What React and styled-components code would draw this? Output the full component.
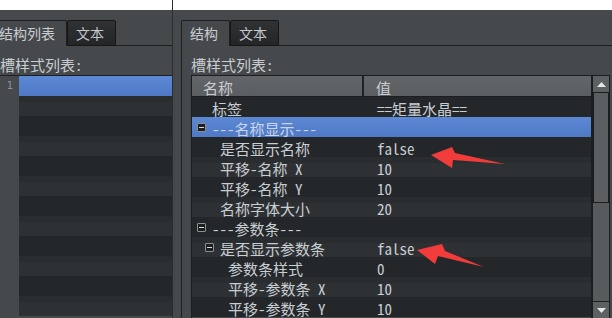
import React from "react";
import styled, { createGlobalStyle } from "styled-components";

const MONO = `"Noto Sans Mono CJK SC", "DejaVu Sans Mono", "Noto Sans CJK SC", monospace`;
const UI = `"Noto Sans CJK SC", "DejaVu Sans", sans-serif`;

const rows = [
  { level: 1, name: "标签", value: "==矩量水晶==" },
  { level: 1, group: true, name: "---名称显示---", selected: true },
  { level: 2, name: "是否显示名称", value: "false" },
  { level: 2, name: "平移-名称 X", value: "10" },
  { level: 2, name: "平移-名称 Y", value: "10" },
  { level: 2, name: "名称字体大小", value: "20" },
  { level: 1, group: true, name: "---参数条---" },
  { level: 2, group: true, name: "是否显示参数条", value: "false" },
  { level: 3, name: "参数条样式", value: "0" },
  { level: 3, name: "平移-参数条 X", value: "10" },
  { level: 3, name: "平移-参数条 Y", value: "10" },
];

const GlobalStyle = createGlobalStyle`
  html, body {
    margin: 0;
    padding: 0;
    background: #45494b;
    overflow: hidden;
  }
`;

const App = () => {
  return (
    <>
      <GlobalStyle />
      <Screen>
        <LeftWindow>
          <TitleStrip />
          <Body $shift={-10}>
            <TabBar>
              <Tab $active>结构列表</Tab>
              <Tab>文本</Tab>
              <TabFill />
            </TabBar>
            <Pane>
              <Label>槽样式列表:</Label>
              <ListFrame>
                {Array.from({ length: 12 }).map((_, i) => (
                  <ListRow key={i}>
                    <Gutter>{i === 0 ? "1" : ""}</Gutter>
                    <ListCell $index={i} $selected={i === 0} />
                  </ListRow>
                ))}
              </ListFrame>
            </Pane>
          </Body>
        </LeftWindow>

        <RightWindow>
          <TitleStrip />
          <Body $shift={8}>
            <TabBar>
              <Tab $active>结构</Tab>
              <Tab>文本</Tab>
              <TabFill />
            </TabBar>
            <Pane $bordered>
              <Label>槽样式列表:</Label>
              <TableFrame>
                <Grid>
                  <HeaderRow>
                    <NameHead>名称</NameHead>
                    <ValueHead>值</ValueHead>
                  </HeaderRow>
                  {rows.map((r, i) => (
                    <Row key={i} $index={i} $selected={r.selected}>
                      <NameCell $indent={20 + 8 * (r.level - 1) - (r.group ? 15 : 0)}>
                        {r.group && <Toggle />}
                        <span>{r.name}</span>
                      </NameCell>
                      <ValueCell>{r.value || ""}</ValueCell>
                    </Row>
                  ))}
                </Grid>
                <ScrollBar>
                  <ScrollButton>
                    <svg width="9" height="5" viewBox="0 0 9 5">
                      <path d="M0 5 L4.5 0 L9 5 Z" fill="#e4e6e8" />
                    </svg>
                  </ScrollButton>
                  <Track>
                    <Thumb />
                  </Track>
                  <ScrollButton>
                    <svg width="9" height="5" viewBox="0 0 9 5">
                      <path d="M0 0 L4.5 5 L9 0 Z" fill="#e4e6e8" />
                    </svg>
                  </ScrollButton>
                </ScrollBar>
              </TableFrame>
            </Pane>
          </Body>
        </RightWindow>

        <Annotations width="612" height="318" viewBox="0 0 612 318">
          <polygon points="431,155 452,147 455,153 505,164 453,160 452,168" fill="#f23b3b" />
          <polygon points="417,250 442,244 445,251 484,267 438,256 435,264" fill="#f23b3b" />
        </Annotations>
      </Screen>
    </>
  );
};

export default App;

const Screen = styled.div`
  position: relative;
  width: 612px;
  height: 318px;
  display: flex;
  overflow: hidden;
  background: #45494b;
`;

const LeftWindow = styled.div`
  width: 172px;
  flex: none;
  display: flex;
  flex-direction: column;
  overflow: hidden;
  border-right: 1px solid #2a2c2e;
  background: #45494b;
`;

const RightWindow = styled.div`
  flex: 1;
  display: flex;
  flex-direction: column;
  overflow: hidden;
  background: #45494b;
`;

const TitleStrip = styled.div`
  height: 10px;
  flex: none;
  background: #ffffff;
`;

const Body = styled.div`
  flex: 1;
  display: flex;
  flex-direction: column;
  padding-top: 10px;
  margin-left: ${(p) => p.$shift}px;
  min-height: 0;
`;

const TabBar = styled.div`
  display: flex;
  align-items: flex-end;
  height: 26px;
  flex: none;
`;

const Tab = styled.div`
  box-sizing: border-box;
  height: 26px;
  padding: 0 0 0 8px;
  width: ${(p) => (p.$active ? "auto" : "49px")};
  min-width: 49px;
  padding-right: ${(p) => (p.$active ? "11px" : "0")};
  font-family: ${UI};
  font-size: 14px;
  line-height: 24px;
  color: ${(p) => (p.$active ? "#c9cdd1" : "#c3c7cb")};
  background: ${(p) =>
    p.$active ? "#45494b" : "linear-gradient(#303234, #232527)"};
  border: 1px solid ${(p) => (p.$active ? "#1c1e20" : "#141618")};
  border-bottom: ${(p) => (p.$active ? "none" : "1px solid #141618")};
  border-radius: 2px 2px 0 0;
  white-space: nowrap;
`;

const TabFill = styled.div`
  flex: 1;
  border-bottom: 1px solid #1c1e20;
`;

const Pane = styled.div`
  flex: 1;
  display: flex;
  flex-direction: column;
  padding: 10px 0 0 9px;
  border-left: 1px solid ${(p) => (p.$bordered ? "#1c1e20" : "transparent")};
  min-height: 0;
`;

const Label = styled.div`
  height: 19px;
  font-family: ${MONO};
  font-size: 15px;
  line-height: 17px;
  color: #c9cdd1;
  white-space: nowrap;
`;

const ListFrame = styled.div`
  border-top: 1px solid #1c1e20;
  display: flex;
  flex-direction: column;
`;

const ListRow = styled.div`
  display: flex;
  height: 20px;
`;

const Gutter = styled.div`
  width: 19px;
  flex: none;
  background: #46494c;
  box-sizing: border-box;
  padding-right: 6px;
  text-align: right;
  font-family: "DejaVu Sans", sans-serif;
  font-size: 10px;
  line-height: 20px;
  color: #8d949a;
`;

const rowBg = (index, selected) => {
  if (selected) return "linear-gradient(#5c88d4, #4f79c6)";
  return index % 2 === 0
    ? "#24272a"
    : "linear-gradient(#2a2d2f 0 28%, #2e3133 28%)";
};

const ListCell = styled.div`
  flex: 1;
  background: ${(p) => rowBg(p.$index, p.$selected)};
`;

const TableFrame = styled.div`
  display: flex;
  margin-right: 2px;
  border: 1px solid #1b1d1f;
  border-bottom: none;
  flex: 1;
  min-height: 0;
`;

const Grid = styled.div`
  flex: 1;
  display: flex;
  flex-direction: column;
  min-width: 0;
`;

const HeaderRow = styled.div`
  display: flex;
  height: 20px;
  flex: none;
  border-bottom: 1px solid #1b1d1f;
  background: linear-gradient(#626668, #5a5e60);
  font-family: ${MONO};
  font-size: 15px;
  color: #c9cdd1;
`;

const NameHead = styled.div`
  width: 172px;
  flex: none;
  padding-left: 11px;
  box-sizing: border-box;
  border-right: 2px solid #1f2123;
  padding-top: 3px;
  line-height: 17px;
`;

const ValueHead = styled.div`
  flex: 1;
  padding-left: 12px;
  padding-top: 3px;
  line-height: 17px;
`;

const Row = styled.div`
  display: flex;
  height: 20px;
  flex: none;
  box-sizing: border-box;
  background: ${(p) => rowBg(p.$index, p.$selected)};
  font-family: ${MONO};
  font-size: 15px;
  color: ${(p) => (p.$selected ? "#cad5e8" : "#c9ced3")};
  white-space: nowrap;
`;

const NameCell = styled.div`
  width: 174px;
  flex: none;
  display: flex;
  align-items: center;
  box-sizing: border-box;
  padding-left: ${(p) => p.$indent}px;
  span {
    padding-top: 3px;
    line-height: 17px;
  }
`;

const Toggle = styled.div`
  width: 9px;
  height: 9px;
  flex: none;
  box-sizing: border-box;
  margin-right: 6px;
  margin-top: 1px;
  border: 1px solid #8b9095;
  border-radius: 1px;
  background: #1c1e20;
  position: relative;
  &::after {
    content: "";
    position: absolute;
    left: 1px;
    right: 1px;
    top: 3px;
    height: 1px;
    background: #d8dcdf;
  }
`;

const ValueCell = styled.div`
  flex: 1;
  padding-left: 11px;
  padding-top: 3px;
  line-height: 17px;
`;

const ScrollBar = styled.div`
  width: 16px;
  flex: none;
  display: flex;
  flex-direction: column;
  gap: 1px;
  border-left: 2px solid #1b1d1f;
  background: #1b1d1f;
`;

const ScrollButton = styled.div`
  height: 16px;
  flex: none;
  display: flex;
  align-items: center;
  justify-content: center;
  background: #5d6163;
`;

const Track = styled.div`
  flex: 1;
  background: #575b5d;
  display: flex;
  flex-direction: column;
`;

const Thumb = styled.div`
  height: 110px;
  box-sizing: border-box;
  border: 1px solid #1b1d1f;
  border-top: none;
  background: #5b5f61;
`;

const Annotations = styled.svg`
  position: absolute;
  left: 0;
  top: 0;
  pointer-events: none;
`;
